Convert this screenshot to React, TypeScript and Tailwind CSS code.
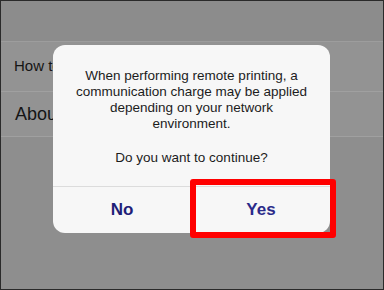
import React from "react";

export default function App() {
  return (
    <div
      className="relative w-[384px] h-[290px] overflow-hidden border border-[#2a2a2a] bg-[#8e8e8e]"
      style={{ fontFamily: '"Liberation Sans", Arial, sans-serif' }}
    >
      <div className="flex flex-col">
        <div className="h-[41px] bg-[#8c8c8c] border-b border-[#9d9d9d]" />
        <div className="h-[50px] bg-[#939393] border-b border-[#a0a0a0] flex items-center pl-[13px] text-[15px] text-[#151515]">
          How to use
        </div>
        <div className="h-[45px] bg-[#939393] border-b border-[#a0a0a0] flex items-center pl-[14px] text-[18px] text-[#151515]">
          About
        </div>
      </div>

      <div className="absolute left-[52px] top-[44px] w-[277px] h-[188px] rounded-[12px] bg-[#f7f7f7] flex flex-col">
        <div className="flex-1 flex flex-col items-center pt-[23px] text-[13.5px] leading-[16px] text-[#1c1c1c] text-center font-medium">
          <p>When performing remote printing, a</p>
          <p>communication charge may be applied</p>
          <p>depending on your network</p>
          <p>environment.</p>
          <p className="mt-[18px]">Do you want to continue?</p>
        </div>
        <div className="h-[47px] border-t border-[#dcdcdc] flex">
          <div className="flex-1 flex items-center justify-center text-[17px] font-bold text-[#1e1e78]">
            No
          </div>
          <div className="flex-1 flex items-center justify-center text-[17px] text-[#2b2b8a] font-semibold border-l border-[#dcdcdc]">
            Yes
          </div>
        </div>
      </div>

      <div className="absolute left-[189px] top-[178px] w-[146px] h-[59px] border-[6px] border-[#ff0000] rounded-[3px]" />
    </div>
  );
}
